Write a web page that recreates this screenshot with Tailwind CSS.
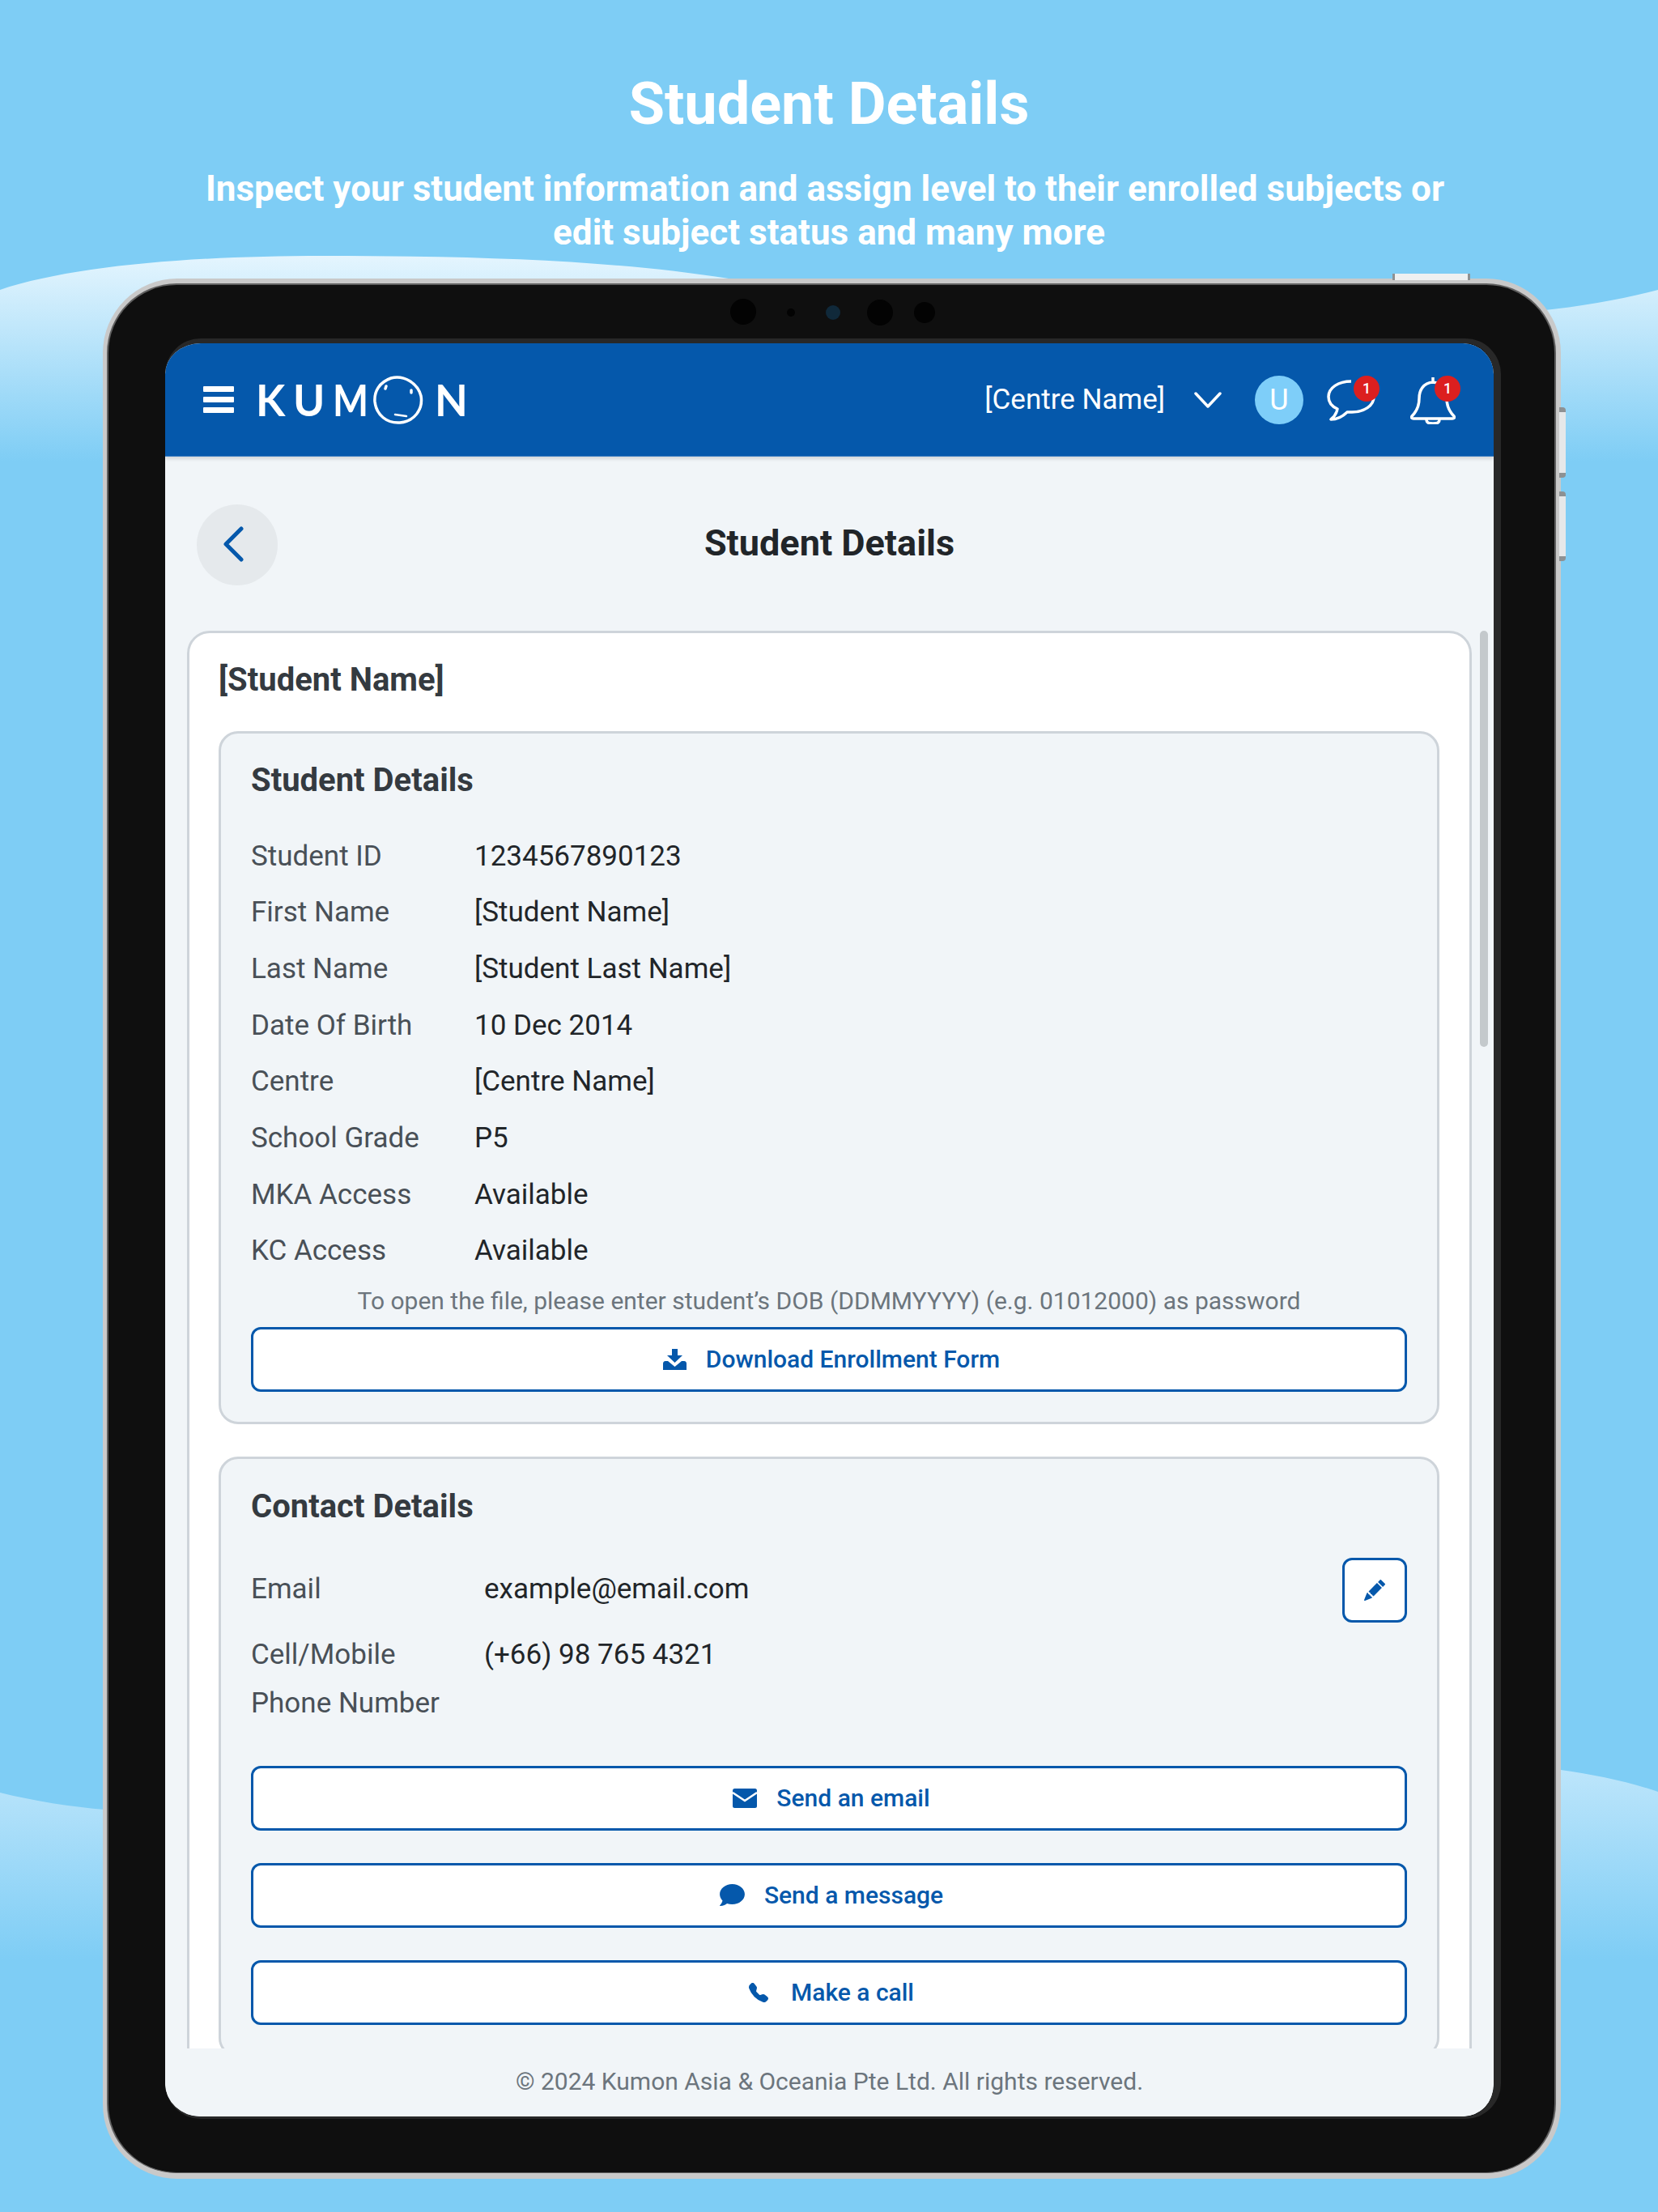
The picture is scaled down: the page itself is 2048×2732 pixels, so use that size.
<!DOCTYPE html>
<html lang="en">
<head>
    <meta charset="UTF-8">
    <meta name="viewport" content="width=device-width, initial-scale=1.0">
    <title>Student Details</title>
    <script src="https://cdn.jsdelivr.net/npm/@tailwindcss/browser@4"></script>
</head>
<body class="bg-[#7ecdf5] font-[family-name:Roboto]">
    <div class="relative w-[2048px] h-[2732px] overflow-hidden">
        <!-- background waves -->
        <svg class="absolute inset-0" width="2048" height="2732" viewBox="0 0 2048 2732">
            <defs>
                <linearGradient id="waveTop" x1="0" y1="316" x2="0" y2="570" gradientUnits="userSpaceOnUse">
                    <stop offset="0" stop-color="#e4f5fe"/>
                    <stop offset="1" stop-color="#7ecdf5"/>
                </linearGradient>
                <linearGradient id="waveBottom" x1="0" y1="2186" x2="0" y2="2420" gradientUnits="userSpaceOnUse">
                    <stop offset="0" stop-color="#bce5fb"/>
                    <stop offset="1" stop-color="#7ecdf5"/>
                </linearGradient>
            </defs>
            <path fill="url(#waveTop)" d="M0 358C90 328 240 316 400 316C600 316 760 322 900 344C1200 385 1600 410 1900 384C1960 378 2010 368 2048 358V600H0Z"/>
            <path fill="url(#waveBottom)" d="M0 2214C40 2224 90 2232 130 2235C600 2280 1500 2260 1928 2186C1970 2192 2010 2200 2048 2213V2520H0Z"/>
        </svg>

        <div class="relative flex flex-col items-center pt-[91px]">
            <h1 class="text-[72px] leading-[76px] font-bold text-white">Student Details</h1>
            <p class="mt-[39px] w-[1600px] text-center text-[44px] leading-[54px] font-bold text-white"><span class="mr-[10px]">Inspect your student information and assign level to their enrolled subjects or</span><br>edit subject status and many more</p>
        </div>

        <!-- tablet frame -->
        <div class="absolute left-[127px] top-[344px] w-[1801px] h-[2347px]">
            <div class="absolute left-[1593px] top-[-6px] w-[96px] h-[8px] bg-[#eef0f1] border-x-[3px] border-[#8d9193]"></div>
            <div class="absolute left-[1799px] top-[159px] w-[8px] h-[87px] rounded-r bg-[#e6e8e9] border-y-[6px] border-[#8d9193]"></div>
            <div class="absolute left-[1799px] top-[263px] w-[8px] h-[86px] rounded-r bg-[#e6e8e9] border-y-[6px] border-[#8d9193]"></div>
            <div class="h-full rounded-[92px] bg-[#c9c9c9] pt-[6px] pb-[7px] pl-[5px] pr-[6px]">
                <div class="relative h-full rounded-[86px] bg-[#0f0f0f] border-t-[2px] border-x-[2px] border-b-[1px] border-[#5f5f5f] pt-[66px] pb-[66px] pl-[70px] pr-[66px]">
                    <!-- cameras -->
                    <div class="absolute left-[768px] top-[17px] w-[32px] h-[32px] rounded-full bg-[#030303]"></div>
                    <div class="absolute left-[838px] top-[29px] w-[10px] h-[10px] rounded-full bg-[#030303]"></div>
                    <div class="absolute left-[886px] top-[25px] w-[18px] h-[18px] rounded-full bg-[#10293a]"></div>
                    <div class="absolute left-[937px] top-[18px] w-[32px] h-[32px] rounded-full bg-[#030303]"></div>
                    <div class="absolute left-[995px] top-[21px] w-[26px] h-[26px] rounded-full bg-[#030303]"></div>

                    <!-- screen -->
                    <div class="h-full rounded-[44px] border-t-[6px] border-r-[9px] border-b-[3px] border-[#282828] overflow-hidden">
                        <div class="flex flex-col h-full rounded-[38px] overflow-hidden bg-[#f1f5f8]">
                            <header class="flex items-center h-[140px] shrink-0 bg-[#0558ab] border-b-[1px] border-[#3b7cc0] pl-[47px] pr-[47px] shadow-[0_3px_4px_rgba(0,0,0,0.12)]">
                                <div class="flex flex-col gap-[6px] w-[38px]">
                                    <span class="h-[7px] bg-white rounded-[1px]"></span>
                                    <span class="h-[7px] bg-white rounded-[1px]"></span>
                                    <span class="h-[7px] bg-white rounded-[1px]"></span>
                                </div>
                                <!-- logo -->
                                <div class="flex items-center ml-[27px] h-[60px] text-white font-[family-name:Lato] text-[53px] leading-none font-bold">
                                    <span class="w-[46px]">K</span>
                                    <span class="w-[49px]">U</span>
                                    <span class="inline-block w-[50px] origin-left scale-x-[0.88]">M</span>
                                    <svg width="62" height="60" viewBox="0 0 62 60" fill="none" stroke="white" stroke-linecap="round">
                                        <path stroke-width="3.5" d="M22 3C38 -1 55 9 59 25C62 42 50 57 33 58C17 59 4 49 2 32C1 19 8 8 22 3Z"/>
                                        <path stroke-width="3.5" d="M16 13L15 16M47 18L47 21"/>
                                        <path stroke-width="2.5" d="M27 48L41 50"/>
                                    </svg>
                                    <span class="ml-[14px]">N</span>
                                </div>
                                <div class="flex-1"></div>
                                <span class="pt-[2px] text-[35px] text-white">[Centre Name]</span>
                                <svg class="ml-[36px]" width="34" height="20" viewBox="0 0 34 20" fill="none" stroke="white" stroke-width="3.5" stroke-linecap="round" stroke-linejoin="round"><path d="M2 2L17 18L32 2"/></svg>
                                <div class="flex items-center justify-center ml-[41px] w-[60px] h-[60px] rounded-full bg-[#7ecef9] text-[36px] text-white">U</div>
                                <!-- chat -->
                                <div class="relative ml-[29px] w-[60px] h-[60px]">
                                    <svg class="absolute left-0 top-[5px]" width="60" height="52" viewBox="0 0 60 52" fill="none" stroke="white" stroke-width="3.5" stroke-linejoin="round"><path d="M30 2C14 2 2 10 2 21C2 28 6 33 13 36C12 41 9 46 5 49C13 49 20 45 25 40C27 40 29 40 31 40C46 40 58 32 58 21"/></svg>
                                    <span class="absolute left-[33px] top-0 flex items-center justify-center w-[32px] h-[32px] rounded-full bg-[#dc1f1f] text-[18px] font-medium text-white">1</span>
                                </div>
                                <!-- bell -->
                                <div class="relative ml-[43px] w-[56px] h-[60px]">
                                    <svg class="absolute left-0 top-0" width="56" height="60" viewBox="0 0 56 60" fill="none" stroke="white" stroke-width="3.5" stroke-linejoin="round"><path d="M28 2V8C16 9 11 18 11 28C11 38 8 44 2 50C1 52 2 53 4 53H52C54 53 55 52 54 50C48 44 45 38 45 28C45 18 40 9 28 8"/><path d="M20 54C20 59 24 59 28 59C32 59 36 59 36 54"/></svg>
                                    <span class="absolute left-[30px] top-0 flex items-center justify-center w-[32px] h-[32px] rounded-full bg-[#dc1f1f] text-[18px] font-medium text-white">1</span>
                                </div>
                            </header>

                            <div class="grid grid-cols-[1fr_auto_1fr] items-center shrink-0 h-[215px] px-[39px] pt-[3px]">
                                <div class="flex items-center justify-center w-[100px] h-[100px] pr-[10px] rounded-full bg-[#e5e9ec]">
                                    <svg class="mb-[2px]" width="26" height="44" viewBox="0 0 26 44" fill="none" stroke="#0558ab" stroke-width="5" stroke-linecap="round" stroke-linejoin="round"><path d="M23 3L4 22L23 41"/></svg>
                                </div>
                                <h2 class="text-[45px] font-bold text-[#212529] mb-[4px]">Student Details</h2>
                                <div></div>
                            </div>

                            <div class="flex flex-1 min-h-0 pl-[27px] overflow-hidden">
                                <main class="self-start w-[1587px] shrink-0 rounded-t-[28px] border-[3px] border-[#ced4da] bg-white pt-[33px] pl-[36px] pr-[37px]">
                                    <h3 class="text-[40px] leading-[50px] font-bold text-[#343a40]">[Student Name]</h3>

                                    <section class="mt-[38px] rounded-[24px] border-[3px] border-[#ced4da] bg-[#f1f5f8] px-[37px] pt-[33px] pb-[37px]">
                                        <h4 class="text-[40px] leading-[50px] font-bold text-[#343a40]">Student Details</h4>
                                        <dl class="mt-[34px] text-[35px] text-[#212529]">
                                            <div class="flex items-center h-[69.7px]"><dt class="w-[276px] text-[#495057]">Student ID</dt><dd>1234567890123</dd></div>
                                            <div class="flex items-center h-[69.7px]"><dt class="w-[276px] text-[#495057]">First Name</dt><dd>[Student Name]</dd></div>
                                            <div class="flex items-center h-[69.7px]"><dt class="w-[276px] text-[#495057]">Last Name</dt><dd>[Student Last Name]</dd></div>
                                            <div class="flex items-center h-[69.7px]"><dt class="w-[276px] text-[#495057]">Date Of Birth</dt><dd>10 Dec 2014</dd></div>
                                            <div class="flex items-center h-[69.7px]"><dt class="w-[276px] text-[#495057]">Centre</dt><dd>[Centre Name]</dd></div>
                                            <div class="flex items-center h-[69.7px]"><dt class="w-[276px] text-[#495057]">School Grade</dt><dd>P5</dd></div>
                                            <div class="flex items-center h-[69.7px]"><dt class="w-[276px] text-[#495057]">MKA Access</dt><dd>Available</dd></div>
                                            <div class="flex items-center h-[69.7px]"><dt class="w-[276px] text-[#495057]">KC Access</dt><dd>Available</dd></div>
                                        </dl>
                                        <p class="mt-[2px] text-center text-[30px] leading-[48px] text-[#6c757d]">To open the file, please enter student’s DOB (DDMMYYYY) (e.g. 01012000) as password</p>
                                        <button class="flex items-center justify-center gap-[24px] mt-[8px] pl-[6px] w-full h-[80px] rounded-[12px] border-[3px] border-[#0558ab] bg-white text-[30px] font-medium text-[#0558ab]">
                                            <svg width="29" height="26" viewBox="0 0 29 26" fill="#0558ab"><path d="M11 0H18V8H24L14.500 17L5 8H11Z"/><path d="M0 18C0 16.500 1 15 3 15H6L14.500 22L23 15H26C28 15 29 16.500 29 18V26H0Z"/></svg>
                                            <span>Download Enrollment Form</span>
                                        </button>
                                    </section>

                                    <section class="mt-[40px] rounded-[24px] border-[3px] border-[#ced4da] bg-[#f1f5f8] px-[37px] pt-[34px] pb-[37px]">
                                        <h4 class="text-[40px] leading-[50px] font-bold text-[#343a40]">Contact Details</h4>
                                        <div class="flex items-center mt-[38px] text-[35px] text-[#212529]">
                                            <span class="w-[288px] text-[#495057]">Email</span>
                                            <span class="flex-1">example@email.com</span>
                                            <button class="flex items-center justify-center w-[80px] h-[80px] rounded-[12px] border-[3px] border-[#0558ab] bg-white">
                                                <svg width="26" height="26" viewBox="0 0 16 16" fill="#0558ab"><path d="M12.854.146a.5.5 0 0 0-.707 0L10.500 1.793 14.207 5.500l1.647-1.646a.5.5 0 0 0 0-.708zm.646 6.061L9.793 2.500 3.293 9H3.500a.5.5 0 0 1 .5.500v.5h.5a.5.5 0 0 1 .5.500v.5h.5a.5.5 0 0 1 .5.500v.5h.5a.5.5 0 0 1 .5.500v.207zm-7.468 7.468A.5.5 0 0 1 6 13.500V13h-.5a.5.5 0 0 1-.5-.5V12h-.5a.5.5 0 0 1-.5-.5V11h-.5a.5.5 0 0 1-.5-.5V10h-.5a.5.5 0 0 1-.175-.032l-.179.178a.5.5 0 0 0-.11.168l-2 5a.5.5 0 0 0 .65.650l5-2a.5.5 0 0 0 .168-.11z"/></svg>
                                            </button>
                                        </div>
                                        <div class="flex mt-[10px] text-[35px] leading-[60px] text-[#212529]">
                                            <span class="w-[288px] text-[#495057]">Cell/Mobile<br>Phone Number</span>
                                            <span>(+66) 98 765 4321</span>
                                        </div>
                                        <div class="flex flex-col gap-[40px] mt-[47px]">
                                            <button class="flex items-center justify-center gap-[24px] pl-[6px] w-full h-[80px] rounded-[12px] border-[3px] border-[#0558ab] bg-white text-[30px] font-medium text-[#0558ab]">
                                                <svg width="30" height="24" viewBox="0 0 30 24"><rect width="30" height="24" rx="2.500" fill="#0558ab"/><path d="M0 5L15 15L30 5" fill="none" stroke="white" stroke-width="2.500"/></svg>
                                                <span>Send an email</span>
                                            </button>
                                            <button class="flex items-center justify-center gap-[24px] pl-[6px] w-full h-[80px] rounded-[12px] border-[3px] border-[#0558ab] bg-white text-[30px] font-medium text-[#0558ab]">
                                                <svg width="31" height="27" viewBox="0 32 512 448" fill="#0558ab"><path d="M256 32C114.600 32 0 125.100 0 240c0 49.600 21.400 95 57 130.700C44.500 421.100 2.700 466 2.200 466.500c-2.200 2.300-2.800 5.700-1.500 8.700S4.800 480 8 480c66.300 0 116-31.800 140.600-51.400 32.700 12.300 69 19.400 107.400 19.400 141.400 0 256-93.100 256-208S397.400 32 256 32z"/></svg>
                                                <span>Send a message</span>
                                            </button>
                                            <button class="flex items-center justify-center gap-[28px] pl-[6px] w-full h-[80px] rounded-[12px] border-[3px] border-[#0558ab] bg-white text-[30px] font-medium text-[#0558ab]">
                                                <svg width="24" height="24" viewBox="0 0 16 16" fill="#0558ab"><path d="M1.885.511a1.745 1.745 0 0 1 2.610.163L6.290 2.980c.329.423.445.974.315 1.494l-.547 2.190a.68.68 0 0 0 .178.643l2.457 2.457a.68.68 0 0 0 .644.178l2.189-.547a1.750 1.750 0 0 1 1.494.315l2.306 1.794c.829.645.905 1.870.163 2.611l-1.034 1.034c-.74.74-1.846 1.065-2.877.702a18.600 18.600 0 0 1-7.010-4.420 18.600 18.600 0 0 1-4.420-7.009c-.362-1.030-.037-2.137.703-2.877z"/></svg>
                                                <span>Make a call</span>
                                            </button>
                                        </div>
                                    </section>
                                </main>
                                <!-- scrollbar -->
                                <div class="ml-[10px] w-[10px] h-[514px] rounded-full bg-[#c4c9cc]"></div>
                            </div>

                            <footer class="relative flex items-center justify-center shrink-0 h-[84px] pb-[4px] bg-[#f1f5f8] text-[30px] text-[#6c757d]">© 2024 Kumon Asia &amp; Oceania Pte Ltd. All rights reserved.</footer>
                        </div>
                    </div>
                </div>
            </div>
        </div>
    </div>
</body>
</html>
